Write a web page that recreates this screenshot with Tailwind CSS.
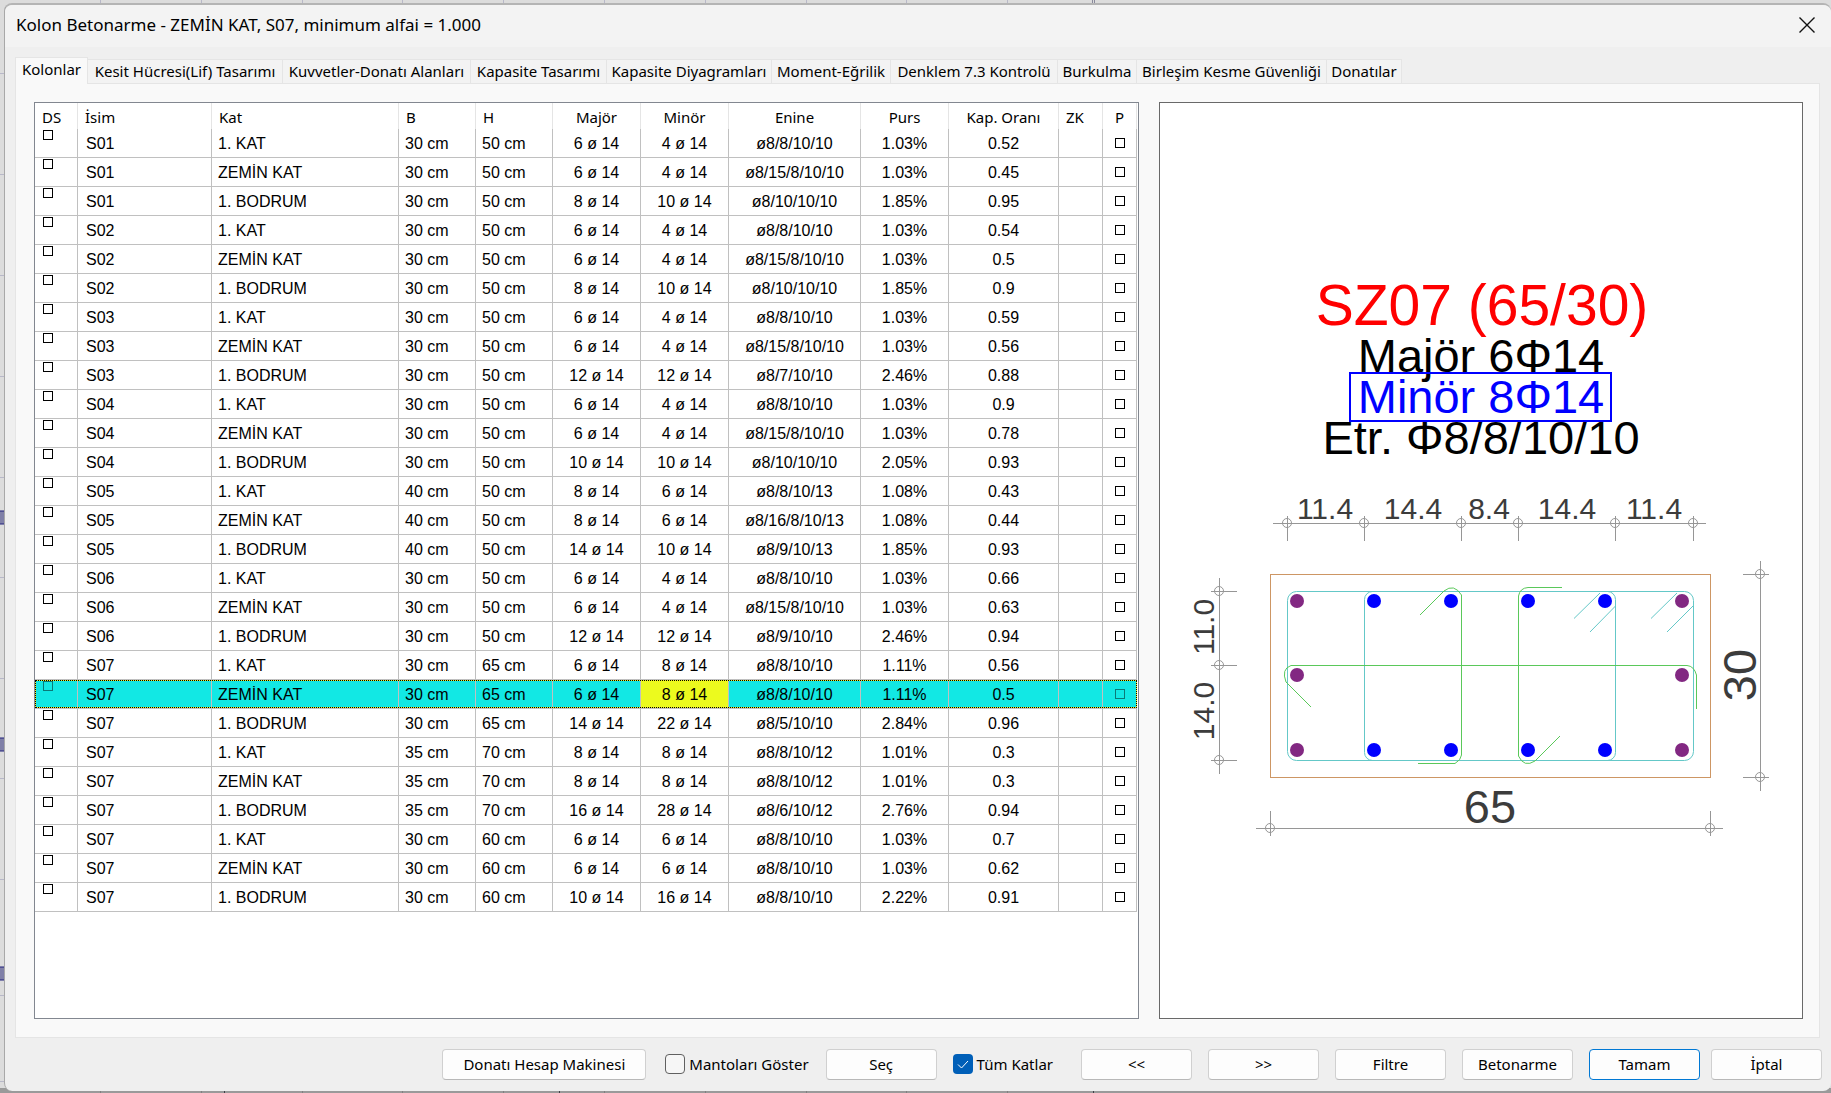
<!DOCTYPE html>
<html lang="tr">
<head>
    <meta charset="UTF-8">
    <meta name="viewport" content="width=device-width, initial-scale=1.0">
    <title>Kolon Betonarme</title>
    <script src="https://cdn.jsdelivr.net/npm/@tailwindcss/browser@4"></script>
</head>
<body class="relative flex min-h-screen bg-[#dcdcdc] pt-[3px] pl-1 pb-[2px] font-['Noto_Sans',sans-serif] text-[15px] text-black">
    <!-- Drawing visible behind the dialog -->
    <svg class="absolute inset-0 w-full h-full" aria-hidden="true">
        <rect y="1088" width="100%" height="5" fill="#9a9a9a"/>
        <path d="M100.5 0V4M201.5 0V4M302.5 0V4M402.5 0V4M503.5 0V4M604.5 0V4M705.5 0V4M806.5 0V4M906.5 0V4M1007.5 0V4M0 73.5H6M0 174.5H6M0 275.5H6M0 376.5H6M0 477.5H6M0 577.5H6M0 678.5H6M0 778.5H6M0 879.5H6M0 995.5H6M0 1081.5H6" stroke="#b8b8c8"/>
        <path d="M1092.5 0V4M1094.5 0V4" stroke="#8a8a9c"/>
        <path d="M100.5 1089V1093M201.5 1089V1093M302.5 1089V1093M402.5 1089V1093M503.5 1089V1093M604.5 1089V1093M705.5 1089V1093M806.5 1089V1093M906.5 1089V1093M1007.5 1089V1093" stroke="#808080"/>
        <path d="M224.5 1089V1093M559.5 1089V1093M1093.5 1089V1093" stroke="#404048"/>
        <g fill="#8080a8" stroke="#20207a">
            <rect x="-1" y="511" width="8" height="13"/>
            <rect x="-1" y="738" width="8" height="13"/>
            <rect x="-1" y="967" width="8" height="13"/>
        </g>
    </svg>

    <!-- Dialog -->
    <div class="relative flex flex-1 flex-col rounded-lg border-t-2 border-l border-t-[#b4b4b4] border-l-[#a8a8a8] bg-[#efefef]">
        <header class="flex h-[42px] items-center justify-between rounded-t-lg bg-[#f3f3f3] pl-[11px] pr-4">
            <h1 class="pb-[2px] text-[17px]">Kolon Betonarme - ZEMİN KAT, S07, minimum alfai = 1.000</h1>
            <button type="button" aria-label="Kapat" class="pb-[2px]">
                <svg class="h-4 w-4" viewBox="0 0 16 16" fill="none" stroke="#111" stroke-width="1.4"><path d="M.5 .5 15.5 15.5M15.5 .5.5 15.5"/></svg>
            </button>
        </header>

        <main class="flex flex-1 flex-col pt-[10px] pl-[10px] pr-[11px]">
            <!-- Tabs -->
            <div id="tabs" role="tablist" class="flex h-[26px] items-end whitespace-nowrap"></div>

            <div class="flex flex-1 gap-5 border border-[#e5e5e5] bg-[#f9f9f9] pt-[18px] pr-4 pb-[18px] pl-[18px]">
                <!-- Column list -->
                <section class="flex-[1104] border border-[#828790] bg-white pr-px">
                    <table class="w-full table-fixed border-separate border-spacing-0">
                        <colgroup>
                            <col class="w-[43px]"><col class="w-[134px]"><col class="w-[187px]"><col class="w-[77px]"><col class="w-[77px]">
                            <col class="w-[88px]"><col class="w-[88px]"><col class="w-[132px]"><col class="w-[88px]"><col class="w-[110px]">
                            <col class="w-[44px]"><col class="w-[34px]">
                        </colgroup>
                        <thead>
                            <tr id="head" class="h-[26px]"></tr>
                        </thead>
                        <tbody id="rows" class="font-['Liberation_Sans',sans-serif] text-base"></tbody>
                    </table>
                </section>

                <!-- Section drawing -->
                <section class="flex-[647] border border-[#696969] bg-white">
                    <svg class="h-[914px] w-[642px] max-w-full" viewBox="0 0 642 914" fill="none" font-family="Liberation Sans, sans-serif" text-anchor="middle">
                        <text x="322" y="222" font-size="57" fill="#f00">SZ07 (65/30)</text>
                        <g font-size="47">
                            <text x="321" y="269" fill="#000">Majör 6Φ14</text>
                            <text x="321" y="351" fill="#000">Etr. Φ8/8/10/10</text>
                            <text x="321" y="310" fill="#00f">Minör 8Φ14</text>
                        </g>
                        <rect x="190" y="270" width="261" height="48" stroke="#00f" stroke-width="2"/>

                        <!-- Dimension texts -->
                        <g font-size="30" fill="#3c3c3c">
                            <text x="165" y="416">11.4</text>
                            <text x="253" y="416">14.4</text>
                            <text x="329" y="416">8.4</text>
                            <text x="407" y="416">14.4</text>
                            <text x="494" y="416">11.4</text>
                            <text transform="translate(54 524) rotate(-90)">11.0</text>
                            <text transform="translate(54 608) rotate(-90)">14.0</text>
                        </g>
                        <g font-size="47" fill="#3c3c3c">
                            <text x="330" y="720">65</text>
                            <text transform="translate(596 572) rotate(-90)">30</text>
                        </g>

                        <!-- Dimension lines -->
                        <path stroke="#969696" d="M113 420.5H546M127.5 413V438M204.5 413V438M301.5 413V438M358.5 413V438M455.5 413V438M533.5 413V438
                            M59.5 475V671M51 488.5H77M51 562.5H77M51 657.5H77
                            M96 725.5H563M110.5 708V733M550.5 708V733
                            M600.5 458V688M583 471.5H609M583 674.5H609"/>
                        <g stroke="#969696">
                            <circle cx="127" cy="420" r="4.5"/><circle cx="204" cy="420" r="4.5"/><circle cx="301" cy="420" r="4.5"/>
                            <circle cx="358" cy="420" r="4.5"/><circle cx="455" cy="420" r="4.5"/><circle cx="533" cy="420" r="4.5"/>
                            <circle cx="59" cy="488" r="4.5"/><circle cx="59" cy="562" r="4.5"/><circle cx="59" cy="657" r="4.5"/>
                            <circle cx="110" cy="725" r="4.5"/><circle cx="550" cy="725" r="4.5"/>
                            <circle cx="600" cy="471" r="4.5"/><circle cx="600" cy="674" r="4.5"/>
                        </g>

                        <!-- Concrete outline and stirrups -->
                        <rect x="110.5" y="471.5" width="440" height="203" stroke="#cd9664"/>
                        <g stroke="#64c8c8">
                            <rect x="127.5" y="488.5" width="406" height="169" rx="9"/>
                            <rect x="204.5" y="488.5" width="251" height="169" rx="8"/>
                            <path d="M414 515.5 440 490M430 529 455.5 503M491 515.5 517 490M507 529 533 503"/>
                        </g>
                        <g stroke="#5ac85a">
                            <path d="M151 604 126 579Q121 566 131 562.5H527Q534 563 536.5 572V606"/>
                            <path d="M260 512 284 488Q294 480 301.5 492V652Q301 657 295 660.5H258"/>
                            <path d="M402 484.5H368Q360 485 358.5 493V653Q364 665 375 658L400 633"/>
                        </g>

                        <!-- Bars -->
                        <g fill="#822882">
                            <circle cx="137" cy="498" r="7"/><circle cx="137" cy="572" r="7"/><circle cx="137" cy="647" r="7"/>
                            <circle cx="522" cy="498" r="7"/><circle cx="522" cy="572" r="7"/><circle cx="522" cy="647" r="7"/>
                        </g>
                        <g fill="#00f">
                            <circle cx="214" cy="498" r="7"/><circle cx="291" cy="498" r="7"/><circle cx="368" cy="498" r="7"/><circle cx="445" cy="498" r="7"/>
                            <circle cx="214" cy="647" r="7"/><circle cx="291" cy="647" r="7"/><circle cx="368" cy="647" r="7"/><circle cx="445" cy="647" r="7"/>
                        </g>
                    </svg>
                </section>
            </div>
        </main>

        <!-- Buttons -->
        <footer class="flex h-[53px] items-center justify-end gap-4 pr-[9px] pb-[1px]">
            <button type="button" class="h-[31px] w-[204px] rounded border border-[#d0d0d0] border-b-[#b8b8b8] bg-[#fdfdfd]">Donatı Hesap Makinesi</button>
            <label class="ml-[3px] mr-px flex items-center gap-1">
                <input type="checkbox" class="h-5 w-5 appearance-none rounded border border-[#606060] bg-[#f6f6f6]">
                Mantoları Göster
            </label>
            <button type="button" class="h-[31px] w-[111px] rounded border border-[#d0d0d0] border-b-[#b8b8b8] bg-[#fdfdfd]">Seç</button>
            <label class="mr-3 flex items-center gap-1">
                <span class="grid h-5 w-5">
                    <input type="checkbox" checked class="col-start-1 row-start-1 h-5 w-5 appearance-none rounded bg-[#005fb8]">
                    <svg class="pointer-events-none col-start-1 row-start-1 h-5 w-5" viewBox="0 0 20 20" fill="none" stroke="#fff"><path d="M5 10.5 8.5 14 15 7"/></svg>
                </span>
                Tüm Katlar
            </label>
            <button type="button" class="h-[31px] w-[111px] rounded border border-[#d0d0d0] border-b-[#b8b8b8] bg-[#fdfdfd]">&lt;&lt;</button>
            <button type="button" class="h-[31px] w-[111px] rounded border border-[#d0d0d0] border-b-[#b8b8b8] bg-[#fdfdfd]">&gt;&gt;</button>
            <button type="button" class="h-[31px] w-[111px] rounded border border-[#d0d0d0] border-b-[#b8b8b8] bg-[#fdfdfd]">Filtre</button>
            <button type="button" class="h-[31px] w-[111px] rounded border border-[#d0d0d0] border-b-[#b8b8b8] bg-[#fdfdfd]">Betonarme</button>
            <div class="flex gap-[11px]">
                <button type="button" class="h-[31px] w-[111px] rounded border border-[#0078d4] bg-[#fdfdfd]">Tamam</button>
                <button type="button" class="h-[31px] w-[111px] rounded border border-[#d0d0d0] border-b-[#b8b8b8] bg-[#fdfdfd]">İptal</button>
            </div>
        </footer>
    </div>

    <script>
        const tabs = [
            ['Kolonlar', 'w-[73px]'],
            ['Kesit Hücresi(Lif) Tasarımı', 'w-[195px]'],
            ['Kuvvetler-Donatı Alanları', 'w-[188px]'],
            ['Kapasite Tasarımı', 'w-[136px]'],
            ['Kapasite Diyagramları', 'w-[165px]'],
            ['Moment-Eğrilik', 'w-[119px]'],
            ['Denklem 7.3 Kontrolü', 'w-[167px]'],
            ['Burkulma', 'w-[79px]'],
            ['Birleşim Kesme Güvenliği', 'w-[190px]'],
            ['Donatılar', 'w-[75px]']
        ];

        document.getElementById('tabs').innerHTML = tabs.map(([name, width], i) => i === 0
            ? `<button role="tab" aria-selected="true" class="${width} h-[27px] -mb-px relative border border-b-0 border-[#e5e5e5] bg-[#f9f9f9] pb-1 text-center">${name}</button>`
            : `<button role="tab" aria-selected="false" class="${width} h-6 border-t border-r border-[#e5e5e5] bg-[#f3f3f3] text-center">${name}</button>`
        ).join('');

        const headers = ['DS', 'İsim', 'Kat', 'B', 'H', 'Majör', 'Minör', 'Enine', 'Purs', 'Kap. Oranı', 'ZK', 'P'];

        document.getElementById('head').innerHTML = headers.map((h, i) => {
            const align = (i >= 5 && i <= 9) || i === 11 ? 'text-center' : 'text-left';
            return `<th class="${align} border-r border-[#e5e5e5] px-[7px] pt-px font-normal leading-5 whitespace-nowrap">${h}</th>`;
        }).join('');

        // name, storey, B, H, major, minor, ties, ratio, capacity
        const columns = [
            ['S01', '1. KAT', 30, 50, 6, 4, '8/8/10/10', '1.03', '0.52'],
            ['S01', 'ZEMİN KAT', 30, 50, 6, 4, '8/15/8/10/10', '1.03', '0.45'],
            ['S01', '1. BODRUM', 30, 50, 8, 10, '8/10/10/10', '1.85', '0.95'],
            ['S02', '1. KAT', 30, 50, 6, 4, '8/8/10/10', '1.03', '0.54'],
            ['S02', 'ZEMİN KAT', 30, 50, 6, 4, '8/15/8/10/10', '1.03', '0.5'],
            ['S02', '1. BODRUM', 30, 50, 8, 10, '8/10/10/10', '1.85', '0.9'],
            ['S03', '1. KAT', 30, 50, 6, 4, '8/8/10/10', '1.03', '0.59'],
            ['S03', 'ZEMİN KAT', 30, 50, 6, 4, '8/15/8/10/10', '1.03', '0.56'],
            ['S03', '1. BODRUM', 30, 50, 12, 12, '8/7/10/10', '2.46', '0.88'],
            ['S04', '1. KAT', 30, 50, 6, 4, '8/8/10/10', '1.03', '0.9'],
            ['S04', 'ZEMİN KAT', 30, 50, 6, 4, '8/15/8/10/10', '1.03', '0.78'],
            ['S04', '1. BODRUM', 30, 50, 10, 10, '8/10/10/10', '2.05', '0.93'],
            ['S05', '1. KAT', 40, 50, 8, 6, '8/8/10/13', '1.08', '0.43'],
            ['S05', 'ZEMİN KAT', 40, 50, 8, 6, '8/16/8/10/13', '1.08', '0.44'],
            ['S05', '1. BODRUM', 40, 50, 14, 10, '8/9/10/13', '1.85', '0.93'],
            ['S06', '1. KAT', 30, 50, 6, 4, '8/8/10/10', '1.03', '0.66'],
            ['S06', 'ZEMİN KAT', 30, 50, 6, 4, '8/15/8/10/10', '1.03', '0.63'],
            ['S06', '1. BODRUM', 30, 50, 12, 12, '8/9/10/10', '2.46', '0.94'],
            ['S07', '1. KAT', 30, 65, 6, 8, '8/8/10/10', '1.11', '0.56'],
            ['S07', 'ZEMİN KAT', 30, 65, 6, 8, '8/8/10/10', '1.11', '0.5'],
            ['S07', '1. BODRUM', 30, 65, 14, 22, '8/5/10/10', '2.84', '0.96'],
            ['S07', '1. KAT', 35, 70, 8, 8, '8/8/10/12', '1.01', '0.3'],
            ['S07', 'ZEMİN KAT', 35, 70, 8, 8, '8/8/10/12', '1.01', '0.3'],
            ['S07', '1. BODRUM', 35, 70, 16, 28, '8/6/10/12', '2.76', '0.94'],
            ['S07', '1. KAT', 30, 60, 6, 6, '8/8/10/10', '1.03', '0.7'],
            ['S07', 'ZEMİN KAT', 30, 60, 6, 6, '8/8/10/10', '1.03', '0.62'],
            ['S07', '1. BODRUM', 30, 60, 10, 16, '8/8/10/10', '2.22', '0.91']
        ];
        const selected = 19;

        document.getElementById('rows').innerHTML = columns.map((c, i) => {
            const on = i === selected;
            const box = on ? 'border-[#0a7a78]' : 'border-black';
            const cell = 'border-r border-b border-[#c0c0c0] px-[6px] pt-[2px] leading-[26px] whitespace-nowrap';
            const tick = label => `<input type="checkbox" aria-label="${label} ${c[0]} ${c[1]}" class="block h-[10px] w-[10px] appearance-none border ${box}">`;
            const focus = on ? '<span class="pointer-events-none absolute inset-x-0 top-0 bottom-px border border-[#f0f020] outline-1 -outline-offset-1 outline-dotted outline-black"></span>' : '';
            return `<tr class="relative h-[29px] ${on ? 'bg-[#12e8e4]' : ''}">
                <td class="border-r border-b border-[#c0c0c0] pt-px pl-2 align-top">${tick('DS')}${focus}</td>
                <td class="${cell}"><span class="pl-[2px]">${c[0]}</span></td>
                <td class="${cell}">${c[1]}</td>
                <td class="${cell}">${c[2]} cm</td>
                <td class="${cell}">${c[3]} cm</td>
                <td class="${cell} text-center">${c[4]} ø 14</td>
                <td class="${cell} text-center ${on ? 'bg-[#ecfa1e]' : ''}">${c[5]} ø 14</td>
                <td class="${cell} text-center">ø${c[6]}</td>
                <td class="${cell} text-center">${c[7]}%</td>
                <td class="${cell} text-center">${c[8]}</td>
                <td class="${cell}"></td>
                <td class="border-r border-b border-[#c0c0c0] pl-3">${tick('P')}</td>
            </tr>`;
        }).join('');
    </script>
</body>
</html>
